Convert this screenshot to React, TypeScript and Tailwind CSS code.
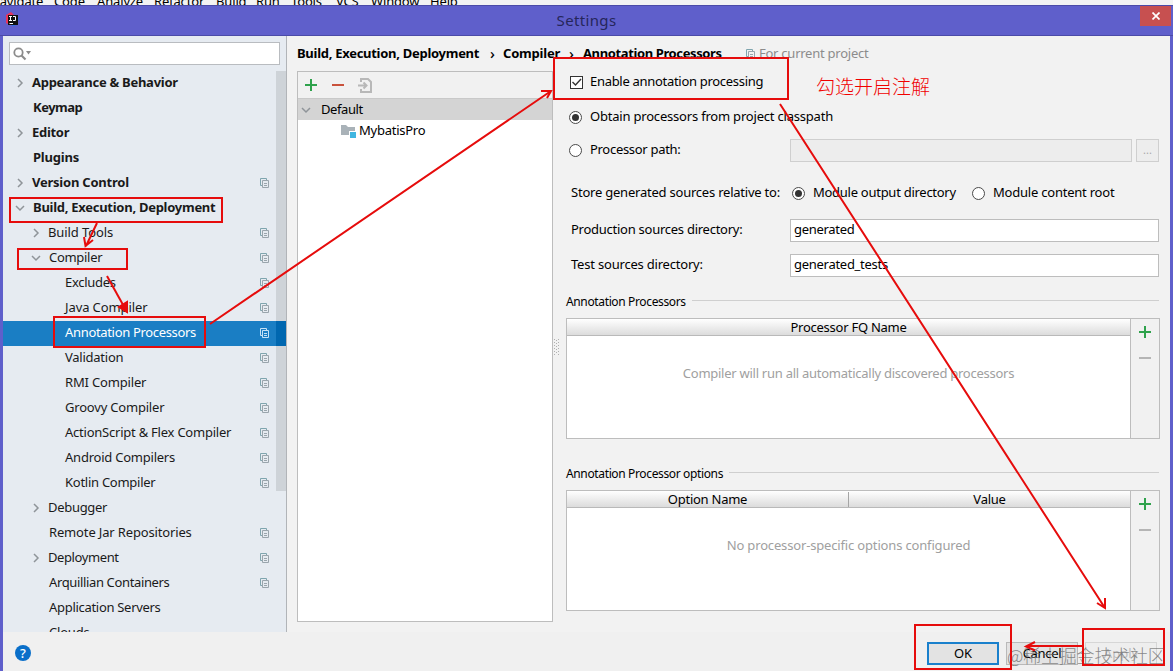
import type { ReactNode } from "react";

interface TreeItem {
  label: string;
  level: 0 | 1 | 2;
  tracking: string;
  arrow?: "right" | "down";
  copy?: boolean;
  selected?: boolean;
}

const TREE: TreeItem[] = [
  { label: "Appearance & Behavior", level: 0, arrow: "right", tracking: "tracking-[-0.28px]" },
  { label: "Keymap", level: 0, tracking: "tracking-[-0.5px]" },
  { label: "Editor", level: 0, arrow: "right", tracking: "tracking-[-0.3px]" },
  { label: "Plugins", level: 0, tracking: "tracking-[-0.2px]" },
  { label: "Version Control", level: 0, arrow: "right", copy: true, tracking: "tracking-[-0.23px]" },
  { label: "Build, Execution, Deployment", level: 0, arrow: "down", tracking: "tracking-[-0.27px]" },
  { label: "Build Tools", level: 1, arrow: "right", copy: true, tracking: "tracking-[-0.1px]" },
  { label: "Compiler", level: 1, arrow: "down", copy: true, tracking: "tracking-[-0.3px]" },
  { label: "Excludes", level: 2, copy: true, tracking: "tracking-[-0.3px]" },
  { label: "Java Compiler", level: 2, copy: true, tracking: "tracking-[-0.1px]" },
  { label: "Annotation Processors", level: 2, copy: true, selected: true, tracking: "tracking-[-0.33px]" },
  { label: "Validation", level: 2, copy: true, tracking: "tracking-[-0.25px]" },
  { label: "RMI Compiler", level: 2, copy: true, tracking: "tracking-[-0.17px]" },
  { label: "Groovy Compiler", level: 2, copy: true, tracking: "tracking-[-0.2px]" },
  { label: "ActionScript & Flex Compiler", level: 2, copy: true, tracking: "tracking-[-0.23px]" },
  { label: "Android Compilers", level: 2, copy: true, tracking: "tracking-[-0.23px]" },
  { label: "Kotlin Compiler", level: 2, copy: true, tracking: "tracking-[-0.26px]" },
  { label: "Debugger", level: 1, arrow: "right", tracking: "tracking-[-0.3px]" },
  { label: "Remote Jar Repositories", level: 1, copy: true, tracking: "tracking-[-0.15px]" },
  { label: "Deployment", level: 1, arrow: "right", copy: true, tracking: "tracking-[-0.4px]" },
  { label: "Arquillian Containers", level: 1, copy: true, tracking: "tracking-[-0.36px]" },
  { label: "Application Servers", level: 1, tracking: "tracking-[-0.3px]" },
  { label: "Clouds", level: 1, tracking: "tracking-[-0.2px]" },
];

const INDENT = ["pl-[12px]", "pl-[28px]", "pl-[44px]"];

function Chevron({ dir }: { dir: "right" | "down" }) {
  return (
    <svg width="10" height="10" viewBox="0 0 10 10" fill="none" stroke="#8f9499" strokeWidth="1.5">
      <path d={dir === "right" ? "M3 1l4 4-4 4" : "M1 3l4 4 4-4"} />
    </svg>
  );
}

function CopyIcon({ light }: { light?: boolean }) {
  return (
    <svg width="10" height="10" viewBox="0 0 10 10" fill="none" stroke={light ? "#c5e2f6" : "#9aa5ac"}>
      <path d="M2.5 7.5h-2v-7h6v2" stroke={light ? "#c5e2f6" : "#7fa5ae"} />
      <path d="M2.5 2.5h6v7h-6zM4 5.5h3M4 7.5h3" />
    </svg>
  );
}

function Plus() {
  return (
    <svg width="12" height="12" viewBox="0 0 12 12" stroke="#2fa24c" strokeWidth="2">
      <path d="M6 0v12M0 6h12" />
    </svg>
  );
}

function Minus({ color }: { color: string }) {
  return (
    <svg width="12" height="12" viewBox="0 0 12 12" stroke={color} strokeWidth="2">
      <path d="M0 6h12" />
    </svg>
  );
}

function Radio({ checked }: { checked?: boolean }) {
  return (
    <span className="flex h-[13px] w-[13px] shrink-0 items-center justify-center rounded-full border border-[#4a4a4a] bg-white">
      {checked && <span className="h-[7px] w-[7px] rounded-full bg-[#333]" />}
    </span>
  );
}

function SectionTitle({ children }: { children: ReactNode }) {
  return (
    <div className="flex h-6 items-center pr-[1px] text-[12px]">
      <span className="tracking-[-0.36px]">{children}</span>
      <span className="mb-[3px] ml-[6px] h-px flex-1 bg-[#cfcfcf]" />
    </div>
  );
}

interface TableProps {
  columns: string[];
  empty: string;
  emptyTracking: string;
}

function Table({ columns, empty, emptyTracking }: TableProps) {
  return (
    <div className="flex h-[121px] border border-[#bdbdbd]">
      <div className="flex flex-1 flex-col bg-white">
        <div className="flex h-[17px] items-center border-b border-[#b9b9b9] bg-gradient-to-b from-white to-[#dcdcdc]">
          {columns.map((c, i) => (
            <div
              key={c}
              className={`flex h-[15px] flex-1 items-center justify-center pt-[2px] tracking-[-0.25px] ${
                i > 0 ? "border-l border-[#a5a5a5]" : ""
              }`}
            >
              {c}
            </div>
          ))}
        </div>
        <div className={`mt-[26px] text-center leading-[22px] text-[#a0a0a0] ${emptyTracking}`}>{empty}</div>
      </div>
      <div className="flex w-[29px] flex-col items-center gap-[14px] border-l border-[#bdbdbd] bg-[#f1f1f1] pt-[7px]">
        <Plus />
        <Minus color="#b5b5b5" />
      </div>
    </div>
  );
}

function MenuStrip() {
  return (
    <div className="h-[5px] shrink-0 overflow-hidden bg-[#f3f3f3] text-[13px] leading-[18px] text-black">
      <div className="-ml-[10px] -mt-[8px] flex gap-[13px] whitespace-nowrap tracking-[-0.15px]">
        <span className="w-[51px]">Navigate</span>
        <span className="w-[30px]">Code</span>
        <span className="w-[44px]">Analyze</span>
        <span className="w-[49px]">Refactor</span>
        <span className="w-[27px]">Build</span>
        <span className="w-[22px]">Run</span>
        <span className="w-[32px]">Tools</span>
        <span className="w-[22px]">VCS</span>
        <span className="w-[46px]">Window</span>
        <span>Help</span>
      </div>
    </div>
  );
}

function TitleBar() {
  return (
    <div className="relative flex h-[31px] shrink-0 items-start justify-center border-y border-[#4b4ba8] bg-[#5f5fcb]">
      <svg className="absolute left-[5px] top-[6px]" width="14" height="15" viewBox="0 0 14 15">
        <path d="M1 3l5-3 4 4-5 9-4-2z" fill="#e8345c" />
        <path d="M9 3l5 3-2 7-5 1z" fill="#1a7bee" />
        <rect x="3" y="3" width="10" height="10" fill="#111" />
        <path d="M4 4.5h3M5.5 4.5v4M4 8.5h3M8 4.5h2.5v4H8M4.5 11.5h3.5" stroke="#fff" fill="none" />
      </svg>
      <span className="text-[15px] leading-[29px] tracking-[0.35px] text-[#26265a]">Settings</span>
      <div className="absolute right-[2px] top-0 flex h-[20px] w-[31px] items-center justify-center bg-[#c75050]">
        <svg width="8" height="8" viewBox="0 0 8 8" stroke="#fff" strokeWidth="1.7">
          <path d="M0.5 0.5l7 7M7.5 0.5l-7 7" />
        </svg>
      </div>
    </div>
  );
}

function Sidebar() {
  return (
    <div className="flex w-[284px] shrink-0 flex-col overflow-hidden border-r border-[#b1b4b8] bg-[#e6ebf1] pt-[6px]">
      <div className="ml-[6px] flex h-[23px] w-[271px] shrink-0 items-center border border-[#b9bcc0] bg-white pl-[3px]">
        <svg width="19" height="14" viewBox="0 0 19 14" fill="none">
          <circle cx="5.5" cy="5.5" r="4.2" stroke="#8c8c8c" strokeWidth="1.8" />
          <path d="M8.5 8.5l4 4" stroke="#8c8c8c" strokeWidth="2.2" />
          <path d="M13 4h5l-2.5 3.5z" fill="#8c8c8c" />
        </svg>
      </div>
      <div className="relative mt-[6px] flex-1 overflow-hidden">
        {TREE.map((item) => (
          <div
            key={item.label}
            className={`flex h-[25px] items-center pb-[2px] ${INDENT[item.level]} ${
              item.selected ? "bg-[#1a7ec4] text-white" : "text-[#1a1a1a]"
            } ${item.level === 0 ? "font-bold" : ""}`}
          >
            <span className="w-[17px]">{item.arrow && <Chevron dir={item.arrow} />}</span>
            <span
              className={`flex-1 whitespace-nowrap ${item.arrow === "right" ? "" : "pl-px"} ${item.tracking}`}
            >
              {item.label}
            </span>
            <span className="mr-[16px]">{item.copy && <CopyIcon light={item.selected} />}</span>
          </div>
        ))}
        {/* scrollbar, darker where it crosses the selected row */}
        <div className="absolute right-0 top-0 h-[420px] w-[10px] bg-black/10" />
        <div className="absolute right-0 top-[250px] h-[25px] w-[10px] bg-[#0067b0]" />
      </div>
    </div>
  );
}

function ProfilePanel() {
  return (
    <div className="h-[551px] w-[256px] border border-[#bdbdbd] bg-white">
      <div className="flex h-[27px] items-center gap-[15px] border-b border-[#c9c9c9] bg-[#f1f1f1] pl-[7px]">
        <Plus />
        <Minus color="#c9523c" />
        <svg className="-ml-px" width="15" height="15" viewBox="0 0 15 15" fill="none" stroke="#b8b8b8" strokeWidth="2">
          <path d="M3 4V1h7l3 3v10H3v-3" />
          <path d="M0 7.5h8M5.5 4.5l3 3-3 3" />
        </svg>
      </div>
      <div className="flex h-[21px] items-center bg-[#d4d4d4] pl-[3px] text-black">
        <Chevron dir="down" />
        <span className="ml-[10px] tracking-[-0.4px]">Default</span>
      </div>
      <div className="flex h-[22px] items-center pl-[43px] text-black">
        <svg width="16" height="14" viewBox="0 0 16 14">
          <path d="M0 1h5l2 2h7v8H0z" fill="#a9b2b8" />
          <rect x="8" y="7" width="7" height="7" fill="#fff" />
          <rect x="9" y="8" width="6" height="6" fill="#40b6e0" />
        </svg>
        <span className="ml-[2px] tracking-[-0.25px]">MybatisPro</span>
      </div>
    </div>
  );
}

function ProcessorForm() {
  return (
    <div className="w-[594px] text-black">
      <div className="-mt-px flex h-6 items-center pl-[4px]">
        <span className="flex h-[13px] w-[13px] items-center justify-center border border-[#333] bg-white">
          <svg width="11" height="9" viewBox="0 0 11 9" fill="none" stroke="#333" strokeWidth="1.4">
            <path d="M1.5 4l3 3L10 1" />
          </svg>
        </span>
        <span className="ml-[7px] tracking-[-0.3px]">Enable annotation processing</span>
      </div>
      <div className="mt-[11px] flex h-6 items-center pl-[3px]">
        <Radio checked />
        <span className="ml-[8px] tracking-[-0.2px]">Obtain processors from project classpath</span>
      </div>
      <div className="mt-[9px] flex h-6 items-center pl-[3px]">
        <Radio />
        <span className="ml-[8px] w-[200px] tracking-[-0.3px]">Processor path:</span>
        <span className="h-[23px] w-[342px] border border-[#cfcfcf] bg-[#ededed]" />
        <span className="ml-[4px] flex h-[23px] w-[23px] items-center justify-center border border-[#cfcfcf] bg-[#ededed] text-[11px] text-[#aaa]">
          ...
        </span>
      </div>
      <div className="mt-[19px] flex h-6 items-center pl-[5px]">
        <span className="w-[221px] tracking-[-0.22px]">Store generated sources relative to:</span>
        <Radio checked />
        <span className="ml-[8px] w-[159px] tracking-[-0.27px]">Module output directory</span>
        <Radio />
        <span className="ml-[8px] tracking-[-0.22px]">Module content root</span>
      </div>
      <div className="mt-[13px] flex h-6 items-center pl-[5px]">
        <span className="w-[219px] tracking-[-0.26px]">Production sources directory:</span>
        <span className="flex h-[23px] w-[369px] items-center border border-[#bdbdbd] bg-white pl-[3px] tracking-[-0.3px]">
          generated
        </span>
      </div>
      <div className="mt-[11px] flex h-6 items-center pl-[5px]">
        <span className="w-[219px] tracking-[-0.2px]">Test sources directory:</span>
        <span className="flex h-[23px] w-[369px] items-center border border-[#bdbdbd] bg-white pl-[3px] tracking-[-0.28px]">
          generated_tests
        </span>
      </div>
      <div className="mt-[13px]">
        <SectionTitle>Annotation Processors</SectionTitle>
      </div>
      <div className="mt-[4px]">
        <Table
          columns={["Processor FQ Name"]}
          empty="Compiler will run all automatically discovered processors"
          emptyTracking="tracking-[-0.26px]"
        />
      </div>
      <div className="mt-[23px]">
        <SectionTitle>Annotation Processor options</SectionTitle>
      </div>
      <div className="mt-[4px]">
        <Table
          columns={["Option Name", "Value"]}
          empty="No processor-specific options configured"
          emptyTracking="tracking-[-0.16px]"
        />
      </div>
    </div>
  );
}

function Footer() {
  return (
    <div className="flex h-[39px] shrink-0 items-start bg-[#f0f0f0] pl-[12px] pr-[13px] pt-[10px] text-black">
      <span className="mt-[3px] flex h-4 w-4 items-center justify-center rounded-full bg-[#0a6fc9] text-[13px] font-medium leading-none text-white">
        ?
      </span>
      <div className="ml-auto flex gap-[7px]">
        <button className="h-[23px] w-[72px] border-2 border-[#1a80cc] bg-[#e3e3e3] leading-none">OK</button>
        <button className="h-[23px] w-[72px] border border-[#b9b9b9] bg-[#e3e3e3] leading-none tracking-[-0.3px]">
          Cancel
        </button>
        <button className="h-[23px] w-[72px] border border-[#d6d6d6] bg-[#eee] leading-none text-[#bcbcbc]">
          Apply
        </button>
      </div>
    </div>
  );
}

function Annotations() {
  return (
    <div className="pointer-events-none absolute inset-0">
      <span className="absolute left-[816px] top-[72px] whitespace-nowrap font-['Noto_Sans_CJK_SC',sans-serif] text-[19px] font-light leading-[28px] text-[#f00000]">
        勾选开启注解
      </span>
      <span className="absolute left-[1007px] top-[641px] whitespace-nowrap font-['Noto_Sans_CJK_SC',sans-serif] text-[18px] font-light leading-[28px] tracking-[-0.2px] text-[#666]/75">
        @稀土掘金技术社区
      </span>
      <svg className="absolute inset-0" width="1173" height="671" fill="none" stroke="#e60c0c" strokeWidth="2">
        <rect x="10" y="198" width="212" height="24" />
        <rect x="18" y="249" width="109" height="20" />
        <rect x="54" y="317" width="151" height="30" />
        <rect x="554" y="58" width="234" height="41" />
        <rect x="915" y="625" width="96" height="44" />
        <rect x="1083" y="629" width="81" height="36" />
        <path d="M97 223L86 246M84 237l1.500 9l7.500-6" />
        <path d="M107 276l20 36" />
        <path d="M119 307l8 5v-10z" fill="#e60c0c" />
        <path d="M210 324L551 91M541 91l10 0l-4 7" />
        <path d="M780 104l325 504M1097 603l8 5v-10M1101 602l4 6" />
        <path d="M1082 646h-55M1035 642l-9 4.500l9 4" />
      </svg>
    </div>
  );
}

export default function App() {
  return (
    <div className="relative flex h-[671px] w-[1173px] flex-col overflow-hidden bg-[#5f5fcb] font-['Noto_Sans',sans-serif] text-[13px]">
      <MenuStrip />
      <TitleBar />
      <div className="ml-[3px] mr-[3px] flex min-h-0 flex-1 flex-col bg-[#f2f2f2]">
        <div className="flex min-h-0 flex-1">
          <Sidebar />
          <div className="flex-1 pl-[10px]">
            <div className="flex h-[35px] items-center font-bold text-black">
              <span className="w-[193px] tracking-[-0.28px]">Build, Execution, Deployment</span>
              <span className="w-[13px] text-[15px] font-medium">›</span>
              <span className="w-[66px] tracking-[-0.2px]">Compiler</span>
              <span className="w-[14px] text-[15px] font-medium">›</span>
              <span className="w-[163px] tracking-[-0.38px]">Annotation Processors</span>
              <CopyIcon />
              <span className="ml-[3px] font-normal tracking-[-0.25px] text-[#8c8c8c]">For current project</span>
            </div>
            <div className="flex">
              <ProfilePanel />
              <div className="w-[13px] pt-[268px]">
                <svg width="6" height="16" viewBox="0 0 6 16" stroke="#b0b0b0" strokeDasharray="1 2">
                  <path d="M1.5 0v16M3.5 1v15M5.5 0v16" />
                </svg>
              </div>
              <ProcessorForm />
            </div>
          </div>
        </div>
        <Footer />
      </div>
      <Annotations />
    </div>
  );
}
